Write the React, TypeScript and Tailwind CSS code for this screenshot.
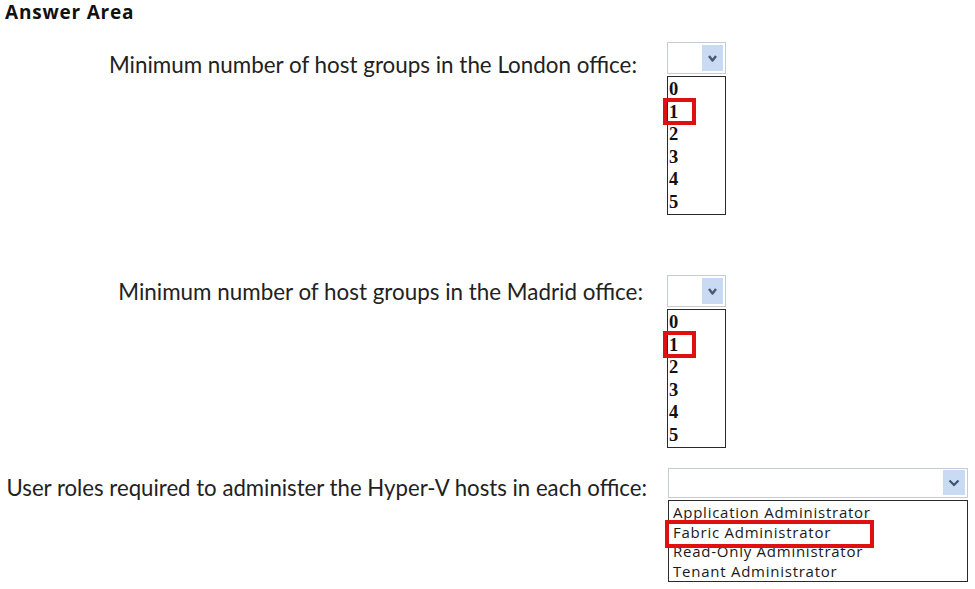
import React from 'react'

const labelFont = { fontFamily: 'Lato, "Open Sans", sans-serif' }
const listFont = { fontFamily: '"Open Sans", sans-serif' }

// Small combo with the blue arrow button, as in the exam "answer area" widget.
const SmallArrow: React.FC = () => (
	<svg width="9" height="7" viewBox="0 0 9 7">
		<path d="M1 1 L4.5 5.5 L8 1" fill="none" stroke="#4b5970" strokeWidth="2.4" strokeLinejoin="round" />
	</svg>
)

const WideArrow: React.FC = () => (
	<svg width="12" height="8" viewBox="0 0 12 8">
		<path d="M1.5 1.5 L6 6 L10.5 1.5" fill="none" stroke="#3c5478" strokeWidth="2.2" />
	</svg>
)

interface NumberPickProps {
	picked: number
}

const NumberPick: React.FC<NumberPickProps> = ({ picked }) => (
	<div className="flex w-[59px] flex-col">
		<div className="flex h-[32px] items-start justify-end border border-[#c3ccd6] bg-white pr-[2px] pt-[2px]">
			<div className="flex h-[26px] w-[21px] items-center justify-center bg-[#c9dbf2]">
				<SmallArrow />
			</div>
		</div>
		<div className="relative mt-[2px] h-[139px] border border-[#2a2a2a] bg-white pt-[1px]">
			{[0, 1, 2, 3, 4, 5].map((n) => (
				<div
					key={n}
					className="pl-[1px] text-[18.5px] font-bold leading-[22.6px] text-[#111]"
					style={{ fontFamily: '"Liberation Serif", serif' }}
				>
					{n}
				</div>
			))}
			<div
				className="absolute left-[-5px] h-[27px] w-[33px] border-[4px] border-[#e01010]"
				style={{ top: 21 + (picked - 1) * 22.6 }}
			/>
		</div>
	</div>
)

const roles = ['Application Administrator', 'Fabric Administrator', 'Read-Only Administrator', 'Tenant Administrator']

const RolePick: React.FC = () => (
	<div className="flex w-[300px] flex-col">
		<div className="flex h-[30px] items-start justify-end border border-[#c3ccd6] bg-white pr-[2px] pt-[1px]">
			<div className="flex h-[25px] w-[22px] items-center justify-center bg-[#c9dbf2]">
				<WideArrow />
			</div>
		</div>
		<div className="relative mt-[2px] h-[82px] w-[300px] border border-[#2a2a2a] bg-white pt-[2px]">
			{roles.map((r) => (
				<div key={r} className="pl-[4px] text-[15px] leading-[19.7px] tracking-[0.75px] text-[#1a1a1a]" style={listFont}>
					{r}
				</div>
			))}
			<div className="absolute left-[-4px] top-[19px] h-[28px] w-[209px] border-[4px] border-[#e01010]" />
		</div>
	</div>
)

export default function App() {
	return (
		<div className="h-[589px] w-[975px] overflow-hidden bg-white text-[#222]" style={labelFont}>
			<div className="pl-[5px] pt-[1px] text-[19px] font-bold leading-[23px] tracking-[0.8px] text-[#111]" style={listFont}>
				Answer Area
			</div>

			<div className="mt-[18px] flex items-start">
				<div className="w-[637px] pt-[10px] text-right text-[22.4px] leading-[26px]">
					Minimum number of host groups in the London office:
				</div>
				<div className="ml-[30px]">
					<NumberPick picked={1} />
				</div>
			</div>

			<div className="mt-[60px] flex items-start">
				<div className="w-[643px] pt-[4px] text-right text-[22.4px] leading-[26px]">
					Minimum number of host groups in the Madrid office:
				</div>
				<div className="ml-[24px]">
					<NumberPick picked={1} />
				</div>
			</div>

			<div className="mt-[20px] flex items-start">
				<div className="w-[647px] pt-[7px] text-right text-[22.2px] leading-[26px]">
					User roles required to administer the Hyper-V hosts in each office:
				</div>
				<div className="ml-[21px]">
					<RolePick />
				</div>
			</div>
		</div>
	)
}
